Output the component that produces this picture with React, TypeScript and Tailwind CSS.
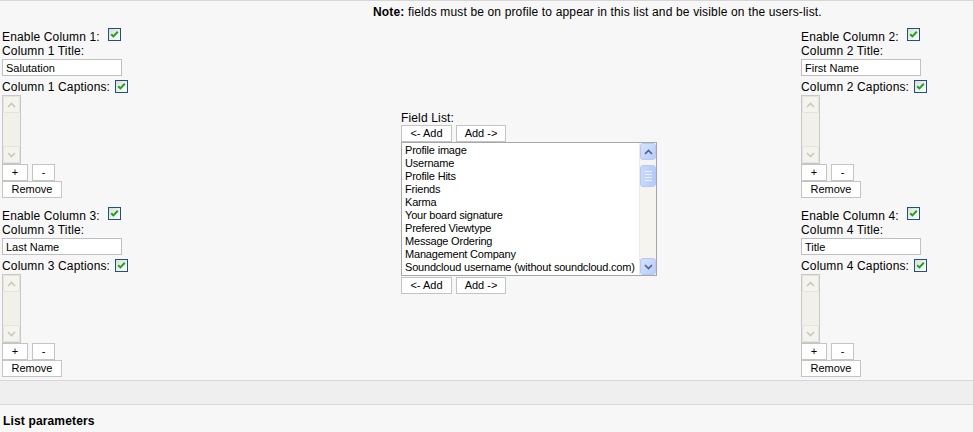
import React from 'react';

const FIELDS = [
  'Profile image',
  'Username',
  'Profile Hits',
  'Friends',
  'Karma',
  'Your board signature',
  'Prefered Viewtype',
  'Message Ordering',
  'Management Company',
  'Soundcloud username (without soundcloud.com)',
];

function CheckBox({ className = '' }: { className?: string }) {
  return (
    <span
      className={`inline-flex h-[13px] w-[13px] shrink-0 items-center justify-center border border-[#1c5180] bg-gradient-to-br from-[#dcdcd7] to-white ${className}`}
    >
      <svg width="9" height="9" viewBox="0 0 9 9" aria-hidden>
        <path d="M1.2 4.2 L3.4 6.4 L7.8 1.8" fill="none" stroke="#21a121" strokeWidth="2" />
      </svg>
    </span>
  );
}

function Btn({ children, className = '' }: { children: React.ReactNode; className?: string }) {
  return (
    <button
      type="button"
      className={`flex h-[17px] items-center justify-center border border-[#c4c4c4] bg-white text-[11px] leading-[15px] tracking-normal text-black ${className}`}
    >
      {children}
    </button>
  );
}

function Chevron({ up, color }: { up?: boolean; color: string }) {
  return (
    <svg width="9" height="6" viewBox="0 0 9 6" aria-hidden>
      <path
        d={up ? 'M1 5 L4.5 1.5 L8 5' : 'M1 1 L4.5 4.5 L8 1'}
        fill="none"
        stroke={color}
        strokeWidth="1.6"
      />
    </svg>
  );
}

// empty, disabled listbox with a greyed scrollbar
function EmptyList() {
  return (
    <div className="flex h-[69px] w-[19px] flex-col border border-[#c8c8c8] bg-[#f1f0ea]">
      <div className="flex h-[17px] w-[17px] items-center justify-center rounded-[2px] border border-[#e4e3dc] bg-[#f4f3ee]">
        <Chevron up color="#cac8bb" />
      </div>
      <div className="flex-1" />
      <div className="flex h-[17px] w-[17px] items-center justify-center rounded-[2px] border border-[#e4e3dc] bg-[#f4f3ee]">
        <Chevron color="#cac8bb" />
      </div>
    </div>
  );
}

function ColumnBlock({ n, title }: { n: number; title: string }) {
  return (
    <div className="flex flex-col items-start">
      <div className="flex h-[16px] items-start">
        <span className="pt-[1px] leading-[16px]">Enable Column {n}:</span>
        <CheckBox className="ml-[8px]" />
      </div>
      <div className="h-[15px] leading-[15px]">Column {n} Title:</div>
      <input
        readOnly
        value={title}
        className="h-[17px] w-[120px] border border-[#c0c0c0] bg-white px-[3px] text-[11px] leading-[15px] tracking-normal text-black outline-none"
      />
      <div className="flex h-[19px] items-start">
        <span className="pt-[3px] leading-[16px]">Column {n} Captions:</span>
        <CheckBox className="ml-[5px] mt-[4px]" />
      </div>
      <EmptyList />
      <div className="flex gap-[4px]">
        <Btn className="w-[26px]">+</Btn>
        <Btn className="w-[23px]">-</Btn>
      </div>
      <Btn className="w-[60px]">Remove</Btn>
    </div>
  );
}

function BlueScrollbar() {
  return (
    <div className="flex w-[17px] shrink-0 flex-col border-l border-[#eeede5] bg-[#f5f4ef]">
      <div className="flex h-[17px] items-center justify-center rounded-[3px] border border-[#b7c9f2] bg-gradient-to-br from-[#d6e2fe] to-[#b8cdfa]">
        <Chevron up color="#4d6185" />
      </div>
      <div className="mt-[5px] flex h-[22px] flex-col items-center justify-center gap-[2px] rounded-[3px] border border-[#b7c9f2] bg-gradient-to-r from-[#c9d9fd] to-[#b4cafa]">
        <span className="h-px w-[7px] bg-[#eef3fe]" />
        <span className="h-px w-[7px] bg-[#eef3fe]" />
        <span className="h-px w-[7px] bg-[#eef3fe]" />
        <span className="h-px w-[7px] bg-[#eef3fe]" />
      </div>
      <div className="flex-1" />
      <div className="flex h-[17px] items-center justify-center rounded-[3px] border border-[#b7c9f2] bg-gradient-to-br from-[#d6e2fe] to-[#b8cdfa]">
        <Chevron color="#4d6185" />
      </div>
    </div>
  );
}

function FieldList() {
  return (
    <div className="flex flex-col items-start">
      <div className="h-[14px] leading-[14px]">Field List:</div>
      <div className="flex gap-[4px]">
        <Btn className="w-[51px]">&lt;- Add</Btn>
        <Btn className="w-[50px]">Add -&gt;</Btn>
      </div>
      <div className="flex h-[134px] w-[256px] border border-[#a7a6aa] bg-white">
        <div className="min-w-0 flex-1 overflow-hidden pl-[3px] pt-[1px] text-[11px] leading-[13px] tracking-[-0.2px]">
          {FIELDS.map((f) => (
            <div key={f} className="h-[13px] whitespace-nowrap">
              {f}
            </div>
          ))}
        </div>
        <BlueScrollbar />
      </div>
      <div className="mt-[1px] flex gap-[4px]">
        <Btn className="w-[51px]">&lt;- Add</Btn>
        <Btn className="w-[50px]">Add -&gt;</Btn>
      </div>
    </div>
  );
}

export default function App() {
  return (
    <div className="h-[432px] w-[973px] overflow-hidden bg-[#f7f7f7] font-['Liberation_Sans',Arial,sans-serif] text-[12px] tracking-[0.15px] text-black">
      <div className="border-t border-[#d6d6d6]" />
      <div className="h-[27px] pl-[373px] pt-[3px] leading-[16px]">
        <b>Note:</b> fields must be on profile to appear in this list and be visible on the users-list.
      </div>

      <div className="grid grid-cols-[399px_400px_1fr] items-center pl-[2px]">
        <div className="flex flex-col gap-[9px]">
          <ColumnBlock n={1} title="Salutation" />
          <ColumnBlock n={3} title="Last Name" />
        </div>
        <FieldList />
        <div className="flex flex-col gap-[9px]">
          <ColumnBlock n={2} title="First Name" />
          <ColumnBlock n={4} title="Title" />
        </div>
      </div>

      <div className="mt-[3px] h-[25px] border-y border-[#d6d6d6] bg-[#efefef]" />
      <div className="pl-[3px] pt-[8px] font-bold leading-[16px]">List parameters</div>
    </div>
  );
}
